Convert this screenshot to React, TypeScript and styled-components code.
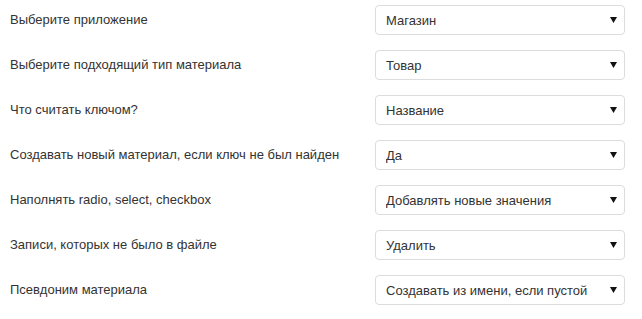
import styled, { createGlobalStyle } from "styled-components";

const GlobalStyle = createGlobalStyle`
  html, body {
    margin: 0;
    padding: 0;
    background: #fff;
  }
  body {
    font-family: "Liberation Sans", Arial, sans-serif;
    font-size: 13px;
    color: #333;
  }
`;

const rows = [
  { label: "Выберите приложение", value: "Магазин" },
  { label: "Выберите подходящий тип материала", value: "Товар" },
  { label: "Что считать ключом?", value: "Название" },
  { label: "Создавать новый материал, если ключ не был найден", value: "Да" },
  { label: "Наполнять radio, select, checkbox", value: "Добавлять новые значения" },
  { label: "Записи, которых не было в файле", value: "Удалить" },
  { label: "Псевдоним материала", value: "Создавать из имени, если пустой" },
];

const App = () => {
  return (
    <>
      <GlobalStyle />
      <Form>
        {rows.map((row) => (
          <Row key={row.label}>
            <Label>{row.label}</Label>
            <SelectWrap>
              <Select defaultValue={row.value}>
                <option>{row.value}</option>
              </Select>
              <Arrow>
                <svg width="7" height="6" viewBox="0 0 7 6">
                  <path d="M0 0H7L3.5 6Z" fill="#111" />
                </svg>
              </Arrow>
            </SelectWrap>
          </Row>
        ))}
      </Form>
    </>
  );
};

export default App;

const Form = styled.div`
  display: flex;
  flex-direction: column;
  gap: 15px;
  padding: 5px 0 0 10px;
  width: 615px;
`;

const Row = styled.div`
  display: grid;
  grid-template-columns: 365px 250px;
  align-items: center;
  height: 30px;
`;

const Label = styled.label`
  font-size: 13px;
  color: #333;
  line-height: 18px;
`;

const SelectWrap = styled.div`
  position: relative;
  width: 250px;
  height: 30px;
`;

const Select = styled.select`
  appearance: none;
  -webkit-appearance: none;
  width: 100%;
  height: 30px;
  box-sizing: border-box;
  border: 1px solid #dcdcdc;
  border-radius: 4px;
  background: #fff;
  padding: 0 24px 0 10px;
  font-family: "Liberation Sans", Arial, sans-serif;
  font-size: 13px;
  color: #333;
  outline: none;
`;

const Arrow = styled.span`
  position: absolute;
  right: 8px;
  top: 12px;
  display: flex;
  pointer-events: none;
`;
